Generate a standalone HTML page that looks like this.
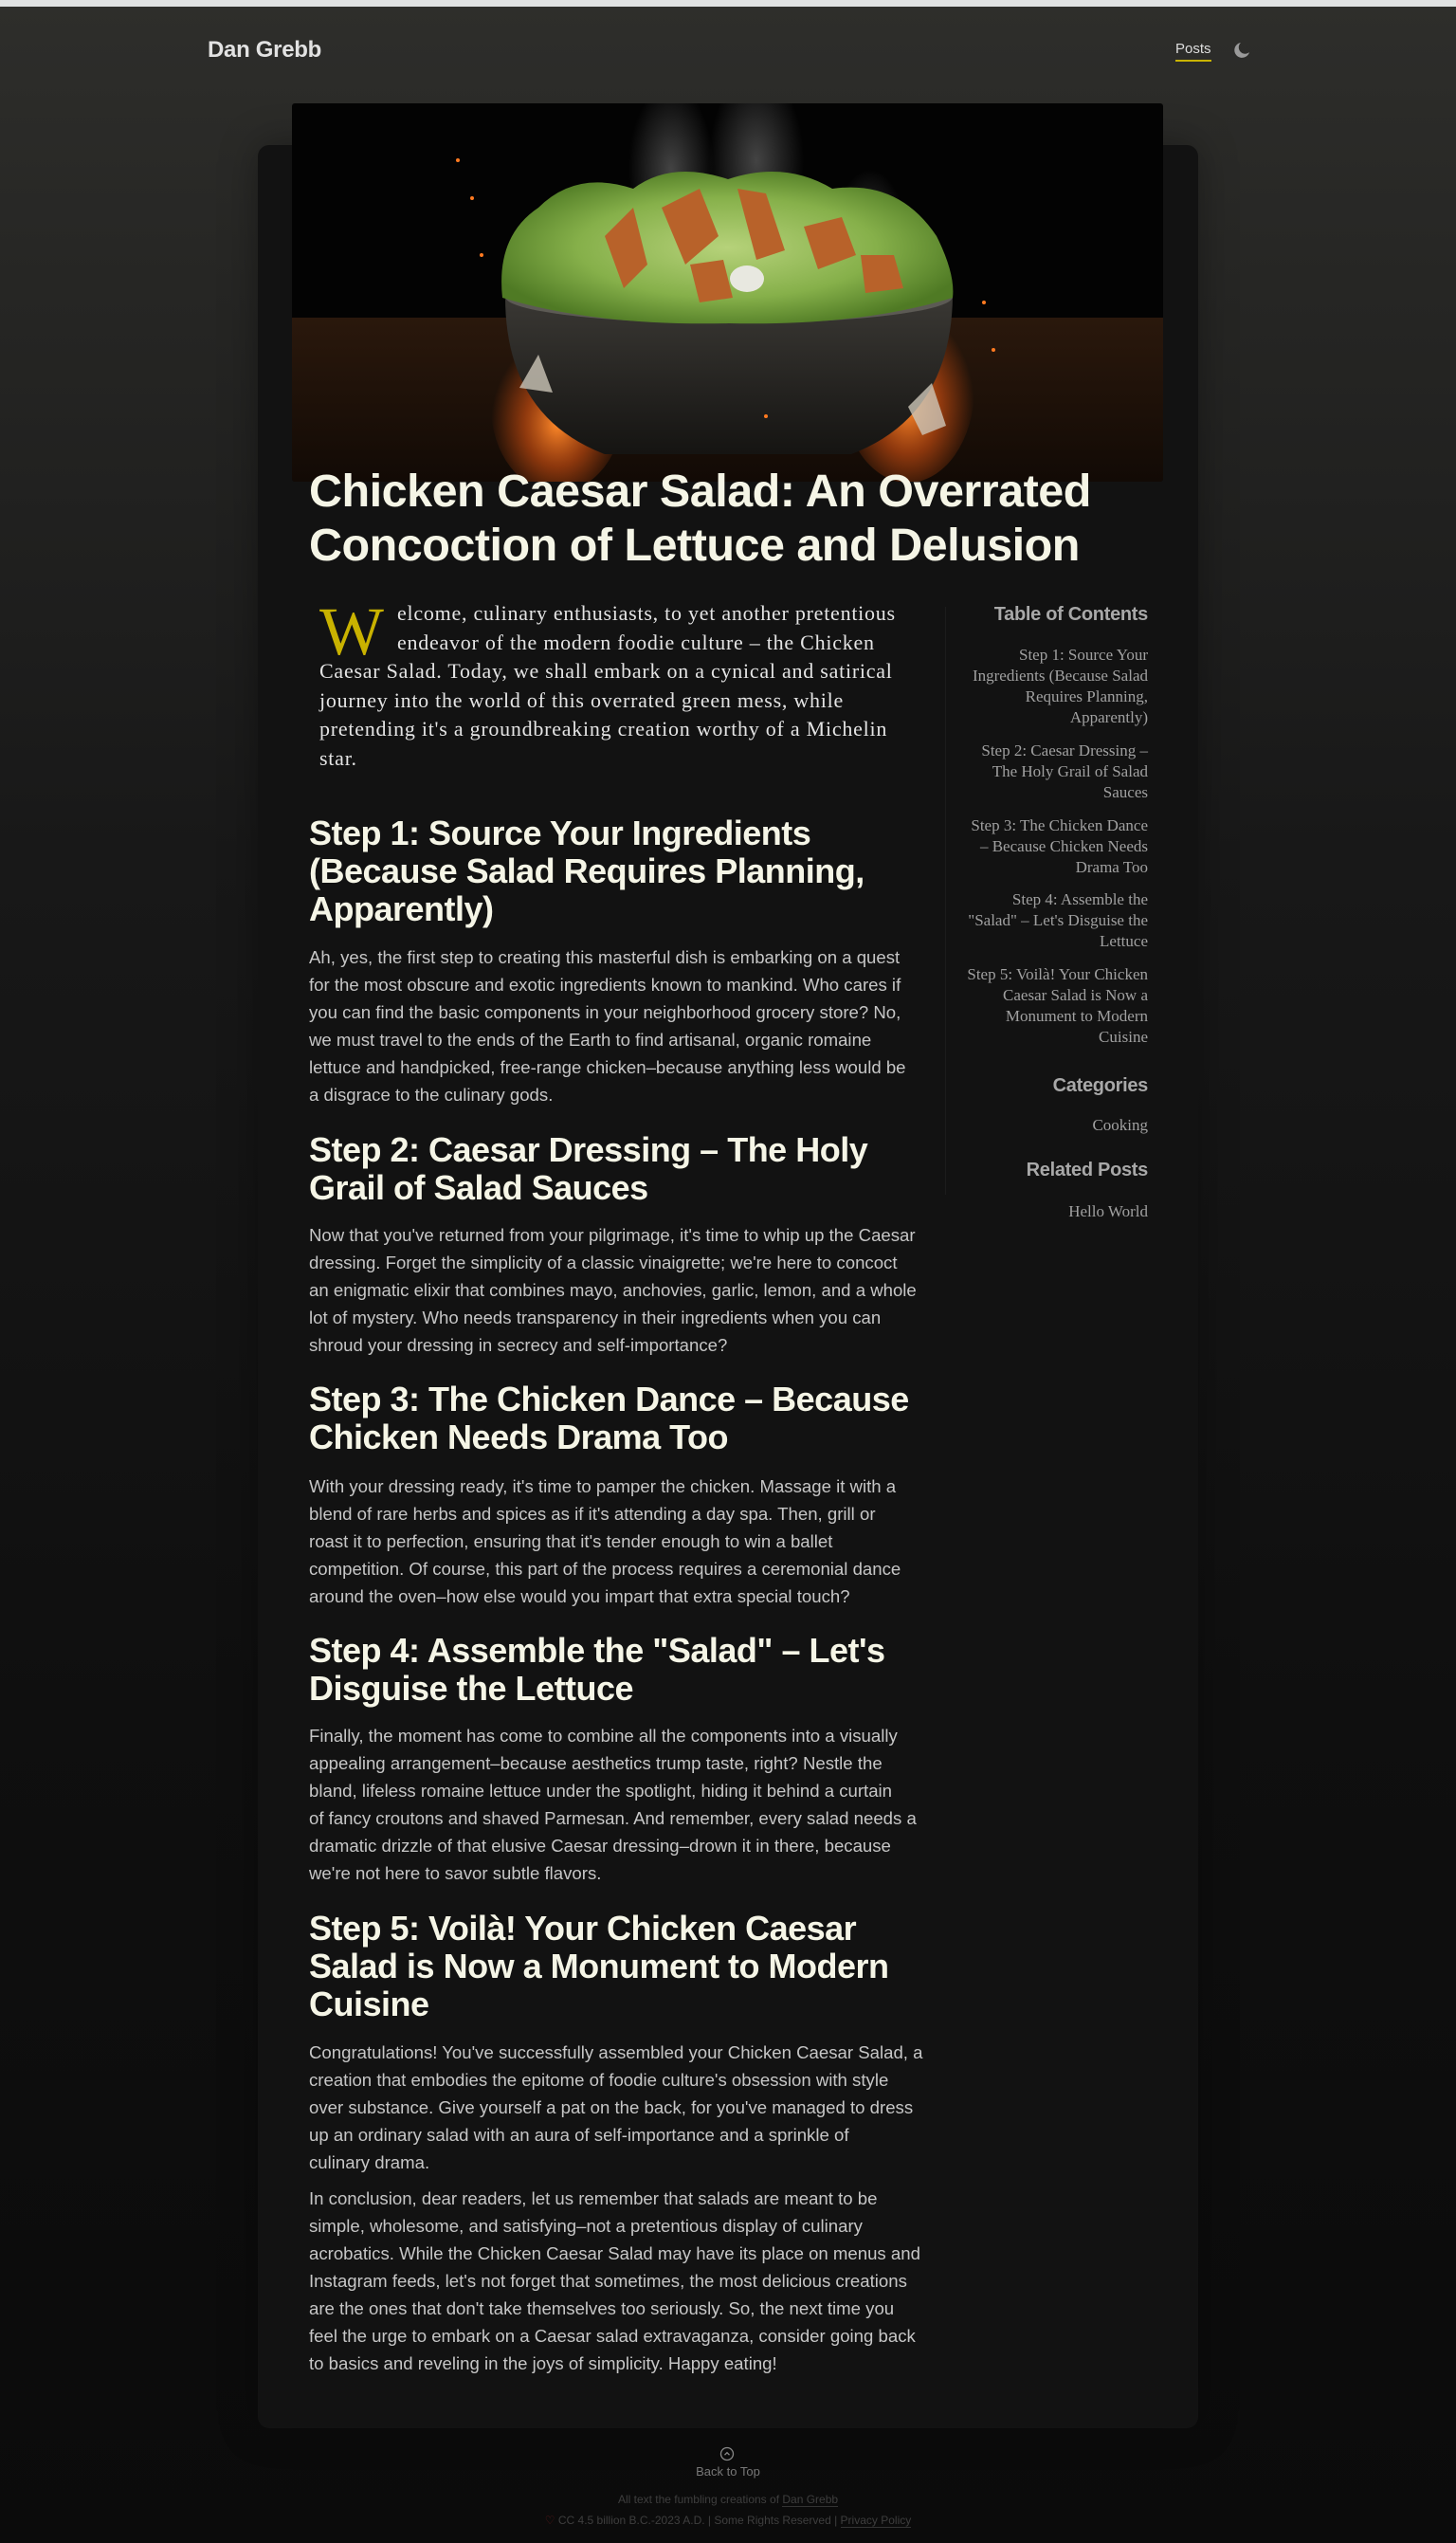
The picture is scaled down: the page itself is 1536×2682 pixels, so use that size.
<!DOCTYPE html>
<html><head><meta charset="utf-8">
<style>
*{margin:0;padding:0;box-sizing:border-box}
html,body{width:1536px;height:2682px;overflow:hidden}
body{position:relative;background:linear-gradient(#2e2e2b 0px,#262624 300px,#181818 900px,#0f0f0f 1800px,#0b0b0b 2682px);font-family:"Liberation Sans",sans-serif}
.topbar{position:absolute;left:0;top:0;width:1536px;height:7px;background:#e0e2e2}
.a{position:absolute;white-space:nowrap}
.logo{left:219px;top:39px;font-size:24px;font-weight:bold;color:#e2e2e2;letter-spacing:-0.3px}
.posts{left:1240px;top:43px;font-size:15px;color:#ddd;border-bottom:2px solid #c9b400;padding-bottom:3px}
.card{position:absolute;left:272px;top:153px;width:992px;height:2408px;background:#121212;border-radius:12px;box-shadow:0 0 40px rgba(0,0,0,.35)}
.hero{position:absolute;left:308px;top:109px;width:919px;height:399px;overflow:hidden;border-radius:3px}
.title{left:326px;top:490px;font-size:48.5px;line-height:57px;font-weight:bold;color:#f5f5e6;letter-spacing:-0.5px}
.intro{left:337px;top:632px;font-family:"Liberation Serif",serif;font-size:22px;line-height:30.5px;color:#e4e4e4;letter-spacing:0.75px}
.cap{position:absolute;left:0;top:4px;font-family:"Liberation Serif",serif;font-size:72px;line-height:60px;color:#c9b200;letter-spacing:0}
h2{position:absolute;left:326px;font-size:36px;line-height:40px;font-weight:bold;color:#f5f5e6;white-space:nowrap;letter-spacing:-0.5px}
p.b{position:absolute;left:326px;font-size:18.6px;line-height:29px;color:#c6c6c6;white-space:nowrap}
.side{position:absolute;left:997px;top:640px;width:1px;height:620px;background:#1c1c1c}
.sh{position:absolute;right:325px;font-size:20px;font-weight:bold;color:#a8a8a8;white-space:nowrap;text-align:right;letter-spacing:-0.3px}
.sl{position:absolute;right:325px;font-family:"Liberation Serif",serif;font-size:17px;line-height:22px;color:#a0a0a0;white-space:nowrap;text-align:right}
.ft{position:absolute;left:0;width:1536px;text-align:center;white-space:nowrap}
</style></head><body>
<div class="topbar"></div>
<div class="a logo">Dan Grebb</div>
<div class="a posts">Posts</div>
<svg class="a" style="left:1300px;top:43px" width="20" height="20" viewBox="0 0 20 20"><path d="M9 2a8 8 0 1 0 9 10a6 6 0 0 1-9-10z" fill="#9a9a9a"/></svg>
<div class="card"></div>
<div class="hero">
<svg width="919" height="399" viewBox="0 0 919 399">
<defs>
<linearGradient id="tb" x1="0" y1="0" x2="0" y2="1"><stop offset="0" stop-color="#2a180c"/><stop offset="1" stop-color="#120a05"/></linearGradient>
<radialGradient id="fl" cx=".5" cy=".6" r=".5"><stop offset="0" stop-color="#ff8a2a"/><stop offset=".5" stop-color="#c04a10" stop-opacity=".7"/><stop offset="1" stop-color="#c04a10" stop-opacity="0"/></radialGradient>
<radialGradient id="lt" cx=".5" cy=".5" r=".55"><stop offset="0" stop-color="#b6d27a"/><stop offset=".6" stop-color="#86b04a"/><stop offset="1" stop-color="#4f7a24"/></radialGradient>
<linearGradient id="bw" x1="0" y1="0" x2="0" y2="1"><stop offset="0" stop-color="#3a3834"/><stop offset="1" stop-color="#151412"/></linearGradient>
<radialGradient id="sm" cx=".5" cy=".5" r=".5"><stop offset="0" stop-color="#bbb" stop-opacity=".35"/><stop offset="1" stop-color="#bbb" stop-opacity="0"/></radialGradient>
</defs>
<rect width="919" height="399" fill="#030303"/>
<rect y="226" width="919" height="173" fill="url(#tb)"/>
<ellipse cx="400" cy="70" rx="45" ry="90" fill="url(#sm)"/>
<ellipse cx="490" cy="60" rx="50" ry="95" fill="url(#sm)"/>
<ellipse cx="610" cy="150" rx="40" ry="80" fill="url(#sm)"/>
<ellipse cx="280" cy="320" rx="70" ry="90" fill="url(#fl)"/>
<ellipse cx="650" cy="300" rx="70" ry="100" fill="url(#fl)"/>
<path d="M225 204 Q225 330 330 370 L590 370 Q695 330 697 204 Z" fill="url(#bw)"/>
<ellipse cx="461" cy="204" rx="236" ry="28" fill="#5c5a54"/>
<path d="M222 205 Q215 140 260 110 Q300 70 360 90 Q400 60 460 80 Q520 60 570 90 Q640 80 680 140 Q700 180 697 205 Q600 235 461 232 Q320 235 222 205Z" fill="url(#lt)"/>
<path d="M330 140 l30 -30 l15 60 l-25 25z M390 110 l40 -20 l20 50 l-35 30z M470 90 l30 5 l20 60 l-30 10z M540 130 l40 -10 l15 40 l-40 15z M600 160 l35 0 l10 35 l-40 5z M420 170 l35 -5 l10 40 l-35 5z" fill="#b8622a"/>
<ellipse cx="480" cy="185" rx="18" ry="14" fill="#e8e8e0"/>
<g fill="#ff7a20"><circle cx="190" cy="100" r="2"/><circle cx="175" cy="60" r="2"/><circle cx="200" cy="160" r="2"/><circle cx="730" cy="210" r="2"/><circle cx="740" cy="260" r="2"/><circle cx="500" cy="330" r="2"/></g>
<path d="M240 300 l20 -35 l15 40z M650 320 l25 -25 l15 45 l-25 10z" fill="#ccc6b8" opacity=".8"/>
</svg>
</div>
<div class="a title">Chicken Caesar Salad: An Overrated<br>Concoction of Lettuce and Delusion</div>
<div class="a intro"><span class="cap">W</span><span style="padding-left:82px">elcome, culinary enthusiasts, to yet another pretentious</span><br><span style="padding-left:82px">endeavor of the modern foodie culture – the Chicken</span><br>Caesar Salad. Today, we shall embark on a cynical and satirical<br>journey into the world of this overrated green mess, while<br>pretending it's a groundbreaking creation worthy of a Michelin<br>star.</div>

<h2 style="top:859px">Step 1: Source Your Ingredients<br>(Because Salad Requires Planning,<br>Apparently)</h2>
<p class="b" style="top:995px">Ah, yes, the first step to creating this masterful dish is embarking on a quest<br>for the most obscure and exotic ingredients known to mankind. Who cares if<br>you can find the basic components in your neighborhood grocery store? No,<br>we must travel to the ends of the Earth to find artisanal, organic romaine<br>lettuce and handpicked, free-range chicken–because anything less would be<br>a disgrace to the culinary gods.</p>

<h2 style="top:1193px">Step 2: Caesar Dressing – The Holy<br>Grail of Salad Sauces</h2>
<p class="b" style="top:1288px">Now that you've returned from your pilgrimage, it's time to whip up the Caesar<br>dressing. Forget the simplicity of a classic vinaigrette; we're here to concoct<br>an enigmatic elixir that combines mayo, anchovies, garlic, lemon, and a whole<br>lot of mystery. Who needs transparency in their ingredients when you can<br>shroud your dressing in secrecy and self-importance?</p>

<h2 style="top:1456px">Step 3: The Chicken Dance – Because<br>Chicken Needs Drama Too</h2>
<p class="b" style="top:1553px">With your dressing ready, it's time to pamper the chicken. Massage it with a<br>blend of rare herbs and spices as if it's attending a day spa. Then, grill or<br>roast it to perfection, ensuring that it's tender enough to win a ballet<br>competition. Of course, this part of the process requires a ceremonial dance<br>around the oven–how else would you impart that extra special touch?</p>

<h2 style="top:1721px">Step 4: Assemble the "Salad" – Let's<br>Disguise the Lettuce</h2>
<p class="b" style="top:1816px">Finally, the moment has come to combine all the components into a visually<br>appealing arrangement–because aesthetics trump taste, right? Nestle the<br>bland, lifeless romaine lettuce under the spotlight, hiding it behind a curtain<br>of fancy croutons and shaved Parmesan. And remember, every salad needs a<br>dramatic drizzle of that elusive Caesar dressing–drown it in there, because<br>we're not here to savor subtle flavors.</p>

<h2 style="top:2014px">Step 5: Voilà! Your Chicken Caesar<br>Salad is Now a Monument to Modern<br>Cuisine</h2>
<p class="b" style="top:2150px">Congratulations! You've successfully assembled your Chicken Caesar Salad, a<br>creation that embodies the epitome of foodie culture's obsession with style<br>over substance. Give yourself a pat on the back, for you've managed to dress<br>up an ordinary salad with an aura of self-importance and a sprinkle of<br>culinary drama.</p>
<p class="b" style="top:2304px">In conclusion, dear readers, let us remember that salads are meant to be<br>simple, wholesome, and satisfying–not a pretentious display of culinary<br>acrobatics. While the Chicken Caesar Salad may have its place on menus and<br>Instagram feeds, let's not forget that sometimes, the most delicious creations<br>are the ones that don't take themselves too seriously. So, the next time you<br>feel the urge to embark on a Caesar salad extravaganza, consider going back<br>to basics and reveling in the joys of simplicity. Happy eating!</p>

<div class="side"></div>
<div class="sh" style="top:637px">Table of Contents</div>
<div class="sl" style="top:680px">Step 1: Source Your<br>Ingredients (Because Salad<br>Requires Planning,<br>Apparently)</div>
<div class="sl" style="top:781px">Step 2: Caesar Dressing –<br>The Holy Grail of Salad<br>Sauces</div>
<div class="sl" style="top:860px">Step 3: The Chicken Dance<br>– Because Chicken Needs<br>Drama Too</div>
<div class="sl" style="top:938px">Step 4: Assemble the<br>"Salad" – Let's Disguise the<br>Lettuce</div>
<div class="sl" style="top:1017px">Step 5: Voilà! Your Chicken<br>Caesar Salad is Now a<br>Monument to Modern<br>Cuisine</div>
<div class="sh" style="top:1134px">Categories</div>
<div class="sl" style="top:1176px">Cooking</div>
<div class="sh" style="top:1223px">Related Posts</div>
<div class="sl" style="top:1267px">Hello World</div>

<svg class="a" style="left:759px;top:2580px" width="16" height="16" viewBox="0 0 16 16"><circle cx="8" cy="8" r="6.5" fill="none" stroke="#888" stroke-width="1.3"/><path d="M5.5 9.2L8 6.7l2.5 2.5" fill="none" stroke="#888" stroke-width="1.3"/></svg>
<div class="ft" style="top:2599px;font-size:13px;color:#777">Back to Top</div>
<div class="ft" style="top:2629px;font-size:12px;color:#3e3e3e">All text the fumbling creations of <span style="border-bottom:1px solid #333">Dan Grebb</span></div>
<div class="ft" style="top:2651px;font-size:12px;color:#3e3e3e"><span style="color:#5a1a1a">♡</span> CC 4.5 billion B.C.-2023 A.D. | Some Rights Reserved | <span style="border-bottom:1px solid #333">Privacy Policy</span></div>
</body></html>
